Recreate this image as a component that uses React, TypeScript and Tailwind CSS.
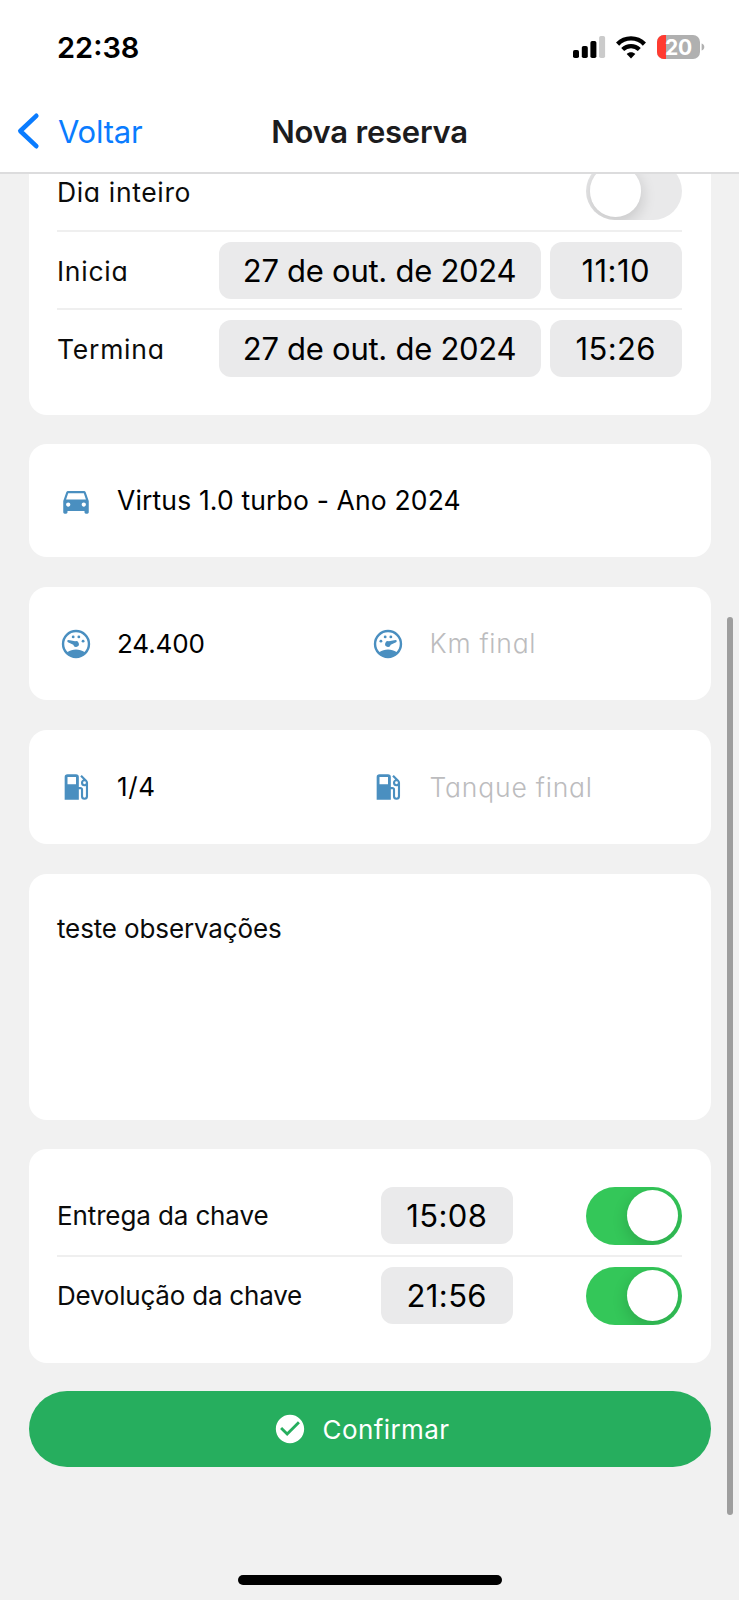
import type { ReactNode } from 'react';
import { MdCheckCircle, MdDirectionsCar } from 'react-icons/md';

function StatusBar() {
  return (
    <div className="flex h-[94px] items-center justify-between pl-[57px] pr-[34px]">
      <span className="text-[29px] font-semibold leading-none text-black">22:38</span>
      <div className="flex items-center">
        <svg width="33" height="24" viewBox="0 0 33 24" className="mr-[10px]">
          <rect x="0" y="15" width="6" height="8" rx="1.8" />
          <rect x="8.8" y="11" width="6" height="12" rx="1.8" />
          <rect x="17.4" y="6" width="6" height="17" rx="1.8" />
          <rect x="26.1" y="1" width="6" height="22" rx="1.8" fill="#cbcbcb" />
        </svg>
        <svg width="30" height="23" viewBox="0 0 30 23" fill="none" stroke="#000" className="mr-[11px]">
          <path d="M1.6 8.1C9 .5 21 .5 28.400 8.100" strokeWidth="4.400" />
          <path d="M6.700 13.600C11.300 9 18.700 9 23.300 13.600" strokeWidth="4.200" />
          <path d="M15 22.600L10.700 18.100C13 15.700 17 15.700 19.300 18.100Z" fill="#000" stroke="none" />
        </svg>
        <div className="relative flex h-6 w-[43px] items-center justify-center overflow-hidden rounded-[7px] bg-[#b0b0b0]">
          <div className="absolute inset-y-0 left-0 w-[9px] bg-[#ff3b30]" />
          <span className="relative text-[21px] font-bold leading-none tracking-[-0.3px] text-white">20</span>
        </div>
        <svg width="4" height="8" viewBox="0 0 4 8" className="ml-px">
          <path d="M.6 .5C2.300 1 3.300 2.400 3.300 4S2.300 7 .6 7.500Z" fill="#b0b0b0" />
        </svg>
      </div>
    </div>
  );
}

function NavBar() {
  return (
    <div className="grid h-[78px] grid-cols-[1fr_auto_1fr] items-center px-[17px] pb-[4px]">
      <div className="flex items-center text-[#0a7cff]">
        <svg width="23" height="38" viewBox="0 0 23 38" fill="none" stroke="currentColor" strokeWidth="4.600" strokeLinecap="round" strokeLinejoin="round">
          <path d="M19.300 3.800L3.300 19L19.300 34.200" />
        </svg>
        <span className="ml-[18px] text-[31px] leading-none tracking-[-0.2px]">Voltar</span>
      </div>
      <h1 className="text-[31px] font-semibold leading-none tracking-[-0.22px] text-[#1c1c1e]">Nova reserva</h1>
    </div>
  );
}

function Switch({ on = false }: { on?: boolean }) {
  return (
    <div className={`flex h-[58px] w-[96.5px] items-center overflow-hidden rounded-full px-[4px] ${on ? 'justify-end bg-[#34c759]' : 'bg-[#e9e9ea]'}`}>
      <div className="size-[51.5px] rounded-full bg-white shadow-[0_5px_14px_2px_rgba(0,0,0,0.13)]" />
    </div>
  );
}

function Pill({ width, children }: { width: string; children: ReactNode }) {
  return (
    <div className={`flex h-[57px] items-center justify-center rounded-[12px] bg-[#eaeaeb] text-[31px] leading-none text-black ${width}`}>
      {children}
    </div>
  );
}

const rounded = "[font-feature-settings:'cv11'_1]";

function DateRow({ label, time, last = false }: { label: string; time: string; last?: boolean }) {
  return (
    <div className={`flex items-center ${last ? 'h-[76px]' : 'h-[78px] border-b-2 border-[#efefef]'}`}>
      <span className={`mt-[2px] text-[26.5px] leading-none tracking-[0.75px] ${rounded}`}>{label}</span>
      <div className="ml-auto flex gap-[9px]">
        <Pill width="w-[322px] tracking-[-0.27px]">27 de out. de 2024</Pill>
        <Pill width="w-[132.5px] tracking-[0.4px]">{time}</Pill>
      </div>
    </div>
  );
}

function KeyRow({ label, time, last = false }: { label: string; time: string; last?: boolean }) {
  return (
    <div className={`grid grid-cols-[323.5px_133px_1fr] items-center ${last ? 'h-[78px]' : 'h-[80px] border-b-2 border-[#efefef]'}`}>
      <span className={`mt-px text-[26px] leading-none ${last ? 'tracking-[-0.22px]' : 'tracking-[-0.12px]'}`}>{label}</span>
      <Pill width="w-[132.5px] tracking-[0.4px]">{time}</Pill>
      <div className="flex justify-end">
        <Switch on />
      </div>
    </div>
  );
}

function Field({ icon, children, muted = false, spacing }: { icon: ReactNode; children: ReactNode; muted?: boolean; spacing: string }) {
  return (
    <div className="flex flex-1 items-center">
      <span className="mt-px text-[#4a8fc0]">{icon}</span>
      <span className={`ml-[24.5px] leading-none ${rounded} ${spacing} ${muted ? 'font-light text-[#bcbcbe]' : 'text-black'}`}>{children}</span>
    </div>
  );
}

function Gauge({ full = false }: { full?: boolean }) {
  return (
    <svg width="34" height="34" viewBox="0 0 24 24" fill="currentColor">
      <path d="M12 2A10 10 0 0 0 2 12A10 10 0 0 0 12 22A10 10 0 0 0 22 12A10 10 0 0 0 12 2M12 3.700A8.300 8.300 0 0 1 20.300 12C20.300 14.200 19.400 16.200 18 17.700C16.300 16.500 14.200 15.900 12 15.900S7.700 16.500 6 17.700C4.600 16.200 3.700 14.200 3.700 12A8.300 8.300 0 0 1 12 3.700" />
      <g transform={full ? 'translate(24 0) scale(-1 1)' : undefined}>
        <path d="M6.700 9.100A.9.9 0 0 0 6.300 10.800L10.100 12.500A2 2 0 1 0 11.400 10.100Z" />
        <circle cx="10" cy="7" r="1" />
        <circle cx="14" cy="7" r="1" />
        <circle cx="17" cy="10" r="1" />
      </g>
    </svg>
  );
}

function GasStation() {
  return (
    <svg width="34" height="34" viewBox="0 0 24 24" fill="currentColor">
      <path d="M18,10A1,1 0 0,1 17,9A1,1 0 0,1 18,8A1,1 0 0,1 19,9A1,1 0 0,1 18,10M12,10H6V5H12M19.77,7.23L19.78,7.22L16.06,3.5L15,4.56L17.11,6.67C16.17,7 15.5,7.93 15.5,9A2.5,2.5 0 0,0 18,11.5C18.36,11.5 18.69,11.42 19,11.29V18.5A1,1 0 0,1 18,19.5A1,1 0 0,1 17,18.5V14A2,2 0 0,0 15,12H14V5A2,2 0 0,0 12,3H6A2,2 0 0,0 4,5V21H14V13.5H15.5V18.5A2.5,2.5 0 0,0 18,21A2.5,2.5 0 0,0 20.5,18.5V9C20.5,8.31 20.22,7.68 19.77,7.23Z" />
    </svg>
  );
}

function Card({ className, children }: { className: string; children: ReactNode }) {
  return <section className={`rounded-[18px] bg-white ${className}`}>{children}</section>;
}

export default function App() {
  return (
    <div className="relative flex h-[1600px] w-[739px] flex-col overflow-hidden bg-[#f1f1f1] font-['Inter',sans-serif] text-[#0b0b0b]">
      <header className="relative z-10 border-b-2 border-[#dcdcdd] bg-white">
        <StatusBar />
        <NavBar />
      </header>

      <main className="flex flex-col px-[28.5px]">
        <Card className="-mt-[24px] h-[265px] px-[28.5px]">
          <div className="flex h-[82px] items-center justify-between border-b-2 border-[#efefef]">
            <span className={`mt-[4px] text-[26.5px] leading-none tracking-[0.65px] ${rounded}`}>Dia inteiro</span>
            <div className="mt-[2px]">
              <Switch />
            </div>
          </div>
          <DateRow label="Inicia" time="11:10" />
          <DateRow label="Termina" time="15:26" last />
        </Card>

        <Card className="mt-[28.500px] flex h-[113.500px] px-[30px]">
          <Field icon={<MdDirectionsCar size={34} />} spacing="text-[26.5px] tracking-[0.15px]">Virtus 1.0 turbo - Ano 2024</Field>
        </Card>

        <Card className="mt-[30px] flex h-[113px] pl-[30px] pr-[27px]">
          <Field icon={<Gauge />} spacing="text-[26px] tracking-[-0.1px]">24.400</Field>
          <Field icon={<Gauge full />} muted spacing="text-[26.5px] tracking-[0.75px]">Km final</Field>
        </Card>

        <Card className="mt-[30px] flex h-[113.500px] pl-[30px] pr-[27px]">
          <Field icon={<GasStation />} spacing="text-[26px] tracking-[0.6px]">1/4</Field>
          <Field icon={<GasStation />} muted spacing="text-[26.5px] tracking-[0.8px]">Tanque final</Field>
        </Card>

        <Card className="mt-[30px] h-[246.500px] px-[28.5px] pt-[42px]">
          <p className="text-[26px] leading-none tracking-[-0.13px]">teste observações</p>
        </Card>

        <Card className="mt-[28.500px] h-[214px] px-[28.5px] pt-[28px]">
          <KeyRow label="Entrega da chave" time="15:08" />
          <KeyRow label="Devolução da chave" time="21:56" last />
        </Card>

        <button className="mt-[28.500px] flex h-[76px] items-center justify-center rounded-full bg-[#26ae5e] pr-[17px] text-white">
          <MdCheckCircle size={34} />
          <span className="ml-[16px] mt-px text-[26px] leading-none tracking-[0.4px]">Confirmar</span>
        </button>
      </main>

      <div className="mx-auto mb-[15px] mt-auto h-[10px] w-[264px] rounded-full bg-black" />
      <div className="absolute right-[6px] top-[617px] h-[898px] w-[6px] rounded-full bg-[#9e9e9e]" />
    </div>
  );
}
